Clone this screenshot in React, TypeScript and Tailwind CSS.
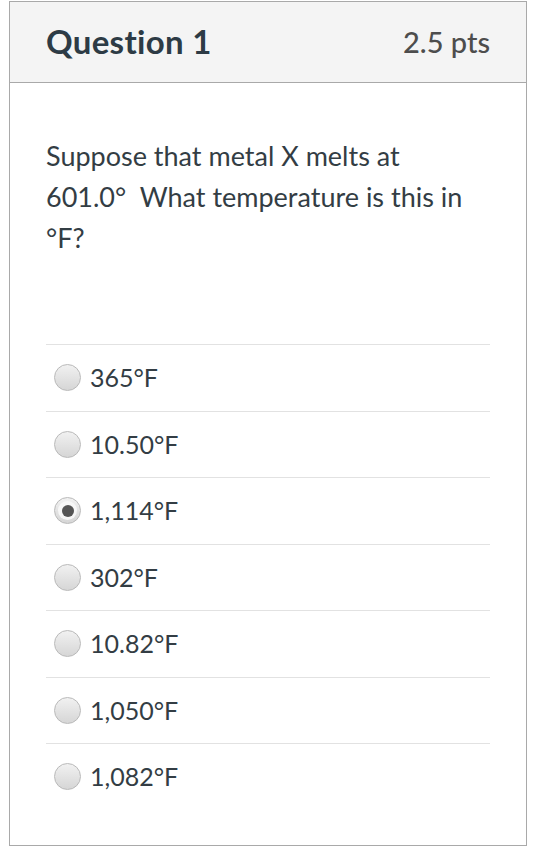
const options = ['365°F', '10.50°F', '1,114°F', '302°F', '10.82°F', '1,050°F', '1,082°F']

function Radio({ checked }: { checked: boolean }) {
  return (
    <span className="relative flex h-[27px] w-[27px] shrink-0 items-center justify-center rounded-full border border-[#b9b9b9] bg-gradient-to-b from-[#f1f1f1] to-[#d6d6d6]">
      {checked && (
        <span className="flex h-[19px] w-[19px] items-center justify-center rounded-full bg-[#f7f7f7]">
          <span className="h-[12px] w-[12px] rounded-full bg-[#555]" />
        </span>
      )}
    </span>
  )
}

export default function App() {
  return (
    <div className="min-h-[853px] bg-white pt-px" style={{ fontFamily: 'Lato, "Open Sans", sans-serif' }}>
      <div className="ml-[9px] h-[845px] w-[518px] border border-[#a9a9a9]">
        <div className="flex h-[81px] items-center justify-between border-b border-[#a9a9a9] bg-[#f4f4f4] px-[36px]">
          <span className="text-[33px] font-bold tracking-[0.3px] text-[#2d3b45]">Question 1</span>
          <span className="text-[29px] font-medium text-[#4d4d4d]">2.5 pts</span>
        </div>
        <div className="px-[36px] pt-[52px]">
          <p className="whitespace-nowrap text-[27px] leading-[41px] text-[#333d44]">
            Suppose that metal X melts at
            <br />
            601.0°&nbsp; What temperature is this in
            <br />
            °F?
          </p>
          <div className="mt-[86px]">
            {options.map((o, i) => (
              <div key={o} className="flex h-[66.5px] items-center gap-[9px] border-t border-[#e2e2e2] pl-[8px]">
                <Radio checked={i === 2} />
                <span className="text-[25px] text-[#333d44]">{o}</span>
              </div>
            ))}
          </div>
        </div>
      </div>
    </div>
  )
}
